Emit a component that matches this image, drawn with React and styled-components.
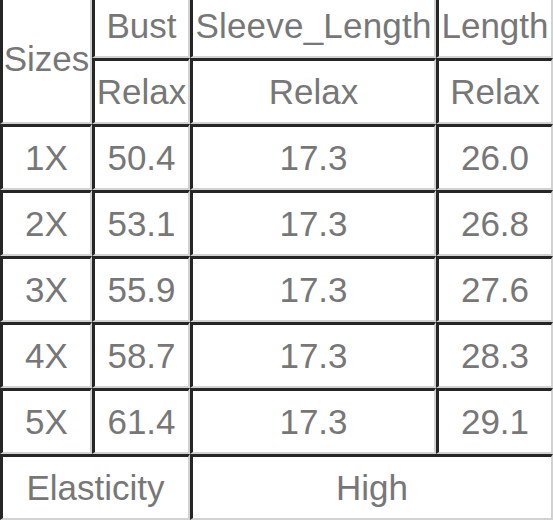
import React from "react";
import styled, { createGlobalStyle } from "styled-components";

const GlobalStyle = createGlobalStyle`
  html, body {
    margin: 0;
    padding: 0;
    background: #fff;
  }
`;

const Frame = styled.div`
  width: 553px;
  height: 520px;
  overflow: hidden;
`;

const Table = styled.table`
  margin-top: -8px;
  border-collapse: separate;
  border-spacing: 0;
  table-layout: fixed;
  width: 553px;
  font-family: "Liberation Sans", Arial, sans-serif;
  font-size: 35px;
  color: #777;
`;

const Cell = styled.td`
  height: 61px;
  padding: 0;
  text-align: center;
  vertical-align: middle;
  white-space: nowrap;
  overflow: visible;
  line-height: 1;
  border-top: 3px solid #262626;
  border-left: 3px solid #262626;
  border-bottom: 2px solid #d2d2d2;
  border-right: 2px solid #d2d2d2;
  letter-spacing: ${(p) => (p.$tight ? "0.2px" : "0")};
`;

const rows = [
  ["1X", "50.4", "17.3", "26.0"],
  ["2X", "53.1", "17.3", "26.8"],
  ["3X", "55.9", "17.3", "27.6"],
  ["4X", "58.7", "17.3", "28.3"],
  ["5X", "61.4", "17.3", "29.1"],
];

export default function App() {
  return (
    <>
      <GlobalStyle />
      <Frame>
        <Table>
          <colgroup>
            <col style={{ width: 92 }} />
            <col style={{ width: 98 }} />
            <col style={{ width: 246 }} />
            <col style={{ width: 117 }} />
          </colgroup>
          <tbody>
            <tr>
              <Cell rowSpan={2}>Sizes</Cell>
              <Cell>Bust</Cell>
              <Cell $tight>Sleeve_Length</Cell>
              <Cell>Length</Cell>
            </tr>
            <tr>
              <Cell>Relax</Cell>
              <Cell>Relax</Cell>
              <Cell>Relax</Cell>
            </tr>
            {rows.map((r) => (
              <tr key={r[0]}>
                {r.map((v, i) => (
                  <Cell key={i}>{v}</Cell>
                ))}
              </tr>
            ))}
            <tr>
              <Cell colSpan={2}>Elasticity</Cell>
              <Cell colSpan={2}>High</Cell>
            </tr>
          </tbody>
        </Table>
      </Frame>
    </>
  );
}
